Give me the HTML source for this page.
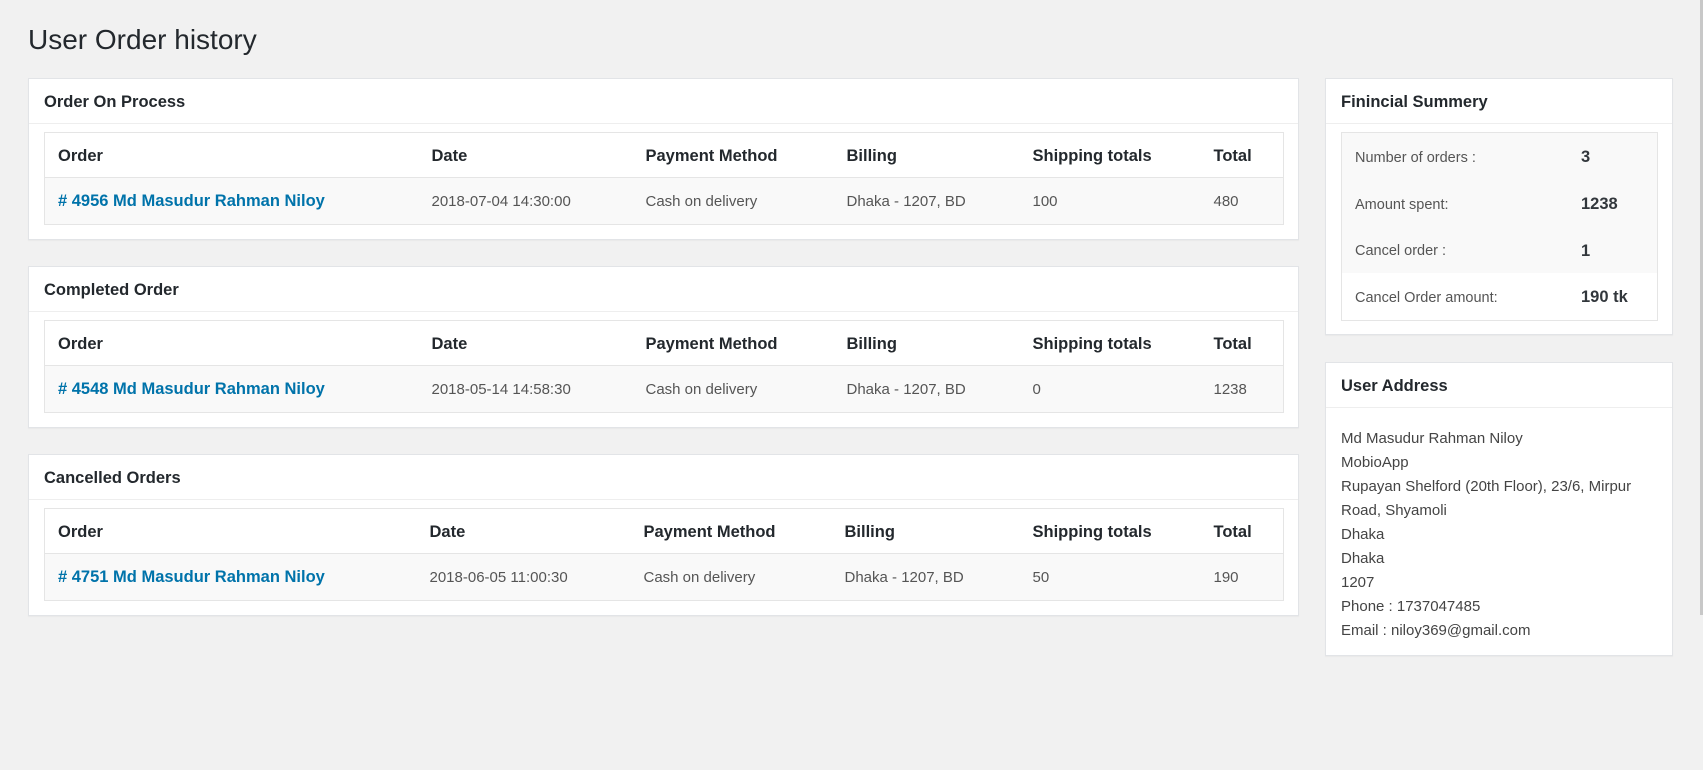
<!DOCTYPE html>
<html><head><meta charset="utf-8"><style>
*{box-sizing:border-box}
body{margin:0;background:#f1f1f1;font-family:"Liberation Sans",sans-serif;color:#23282d;width:1703px;height:770px;overflow:hidden;position:relative}
h1{position:absolute;left:28px;top:24px;margin:0;font-size:28px;font-weight:400;color:#23282d}
.card{position:absolute;background:#fff;border:1px solid #e2e4e7;box-shadow:0 1px 1px rgba(0,0,0,.04)}
.hd{height:45px;border-bottom:1px solid #eee;padding-left:15px;line-height:46px;font-size:16.5px;font-weight:600}
table{border-collapse:collapse;table-layout:fixed;margin:8px 0 0 15px;border:1px solid #e5e5e5}
th{text-align:left;font-weight:600;font-size:16.5px;height:45px;padding:2px 0 0 13px;border-bottom:1px solid #e5e5e5;background:#fff}
td{font-size:15px;color:#555;height:47px;padding:0 0 0 13px;background:#f9f9f9}
td a{color:#0073aa;font-weight:600;font-size:16.5px;text-decoration:none}
.sum{margin:8px 0 0 15px;width:317px;border:1px solid #e5e5e5}
.sum div{height:46.7px;display:flex;align-items:center;background:#f9f9f9;font-size:14.5px;color:#555;padding-top:3px}
.sum div.w{background:#fff}
.sum span{display:inline-block;width:239px;padding-left:13px}
.sum b{font-size:16.5px;color:#32373c;font-weight:600}
.addr{padding:19px 0 0 15px;font-size:15px;line-height:24px;color:#444}
.sb{position:absolute;left:1700px;top:0;width:3px;height:615px;background:#c8c8c8}
</style></head><body>
<h1>User Order history</h1>

<div class="card" style="left:28px;top:78px;width:1271px;height:162px">
<div class="hd">Order On Process</div>
<table style="width:1240px"><colgroup><col style="width:374px"><col style="width:214px"><col style="width:201px"><col style="width:186px"><col style="width:181px"><col></colgroup>
<tr><th>Order</th><th>Date</th><th>Payment Method</th><th>Billing</th><th>Shipping totals</th><th>Total</th></tr>
<tr><td><a># 4956 Md Masudur Rahman Niloy</a></td><td>2018-07-04 14:30:00</td><td>Cash on delivery</td><td>Dhaka - 1207, BD</td><td>100</td><td>480</td></tr></table>
</div>

<div class="card" style="left:28px;top:266px;width:1271px;height:162px">
<div class="hd">Completed Order</div>
<table style="width:1240px"><colgroup><col style="width:374px"><col style="width:214px"><col style="width:201px"><col style="width:186px"><col style="width:181px"><col></colgroup>
<tr><th>Order</th><th>Date</th><th>Payment Method</th><th>Billing</th><th>Shipping totals</th><th>Total</th></tr>
<tr><td><a># 4548 Md Masudur Rahman Niloy</a></td><td>2018-05-14 14:58:30</td><td>Cash on delivery</td><td>Dhaka - 1207, BD</td><td>0</td><td>1238</td></tr></table>
</div>

<div class="card" style="left:28px;top:454px;width:1271px;height:162px">
<div class="hd">Cancelled Orders</div>
<table style="width:1240px"><colgroup><col style="width:372px"><col style="width:214px"><col style="width:201px"><col style="width:188px"><col style="width:181px"><col></colgroup>
<tr><th>Order</th><th>Date</th><th>Payment Method</th><th>Billing</th><th>Shipping totals</th><th>Total</th></tr>
<tr><td><a># 4751 Md Masudur Rahman Niloy</a></td><td>2018-06-05 11:00:30</td><td>Cash on delivery</td><td>Dhaka - 1207, BD</td><td>50</td><td>190</td></tr></table>
</div>

<div class="card" style="left:1325px;top:78px;width:348px;height:257px">
<div class="hd">Finincial Summery</div>
<div class="sum">
<div><span>Number of orders :</span><b>3</b></div>
<div><span>Amount spent:</span><b>1238</b></div>
<div><span>Cancel order :</span><b>1</b></div>
<div class="w"><span>Cancel Order amount:</span><b>190 tk</b></div>
</div>
</div>

<div class="card" style="left:1325px;top:362px;width:348px;height:294px">
<div class="hd">User Address</div>
<div class="addr">Md Masudur Rahman Niloy<br>MobioApp<br>Rupayan Shelford (20th Floor), 23/6, Mirpur<br>Road, Shyamoli<br>Dhaka<br>Dhaka<br>1207<br>Phone : 1737047485<br>Email : niloy369@gmail.com</div>
</div>
<div class="sb"></div>
</body></html>
